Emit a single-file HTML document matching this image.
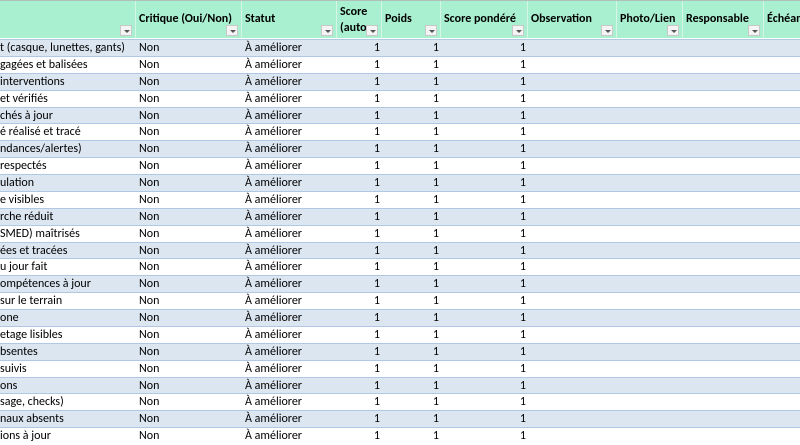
<!DOCTYPE html><html><head><meta charset="utf-8"><style>
body{margin:0;width:800px;height:445px;overflow:hidden;background:#fff;font-family:Calibri,"Liberation Sans",sans-serif;font-size:12px;color:#000;position:relative}
.h{position:absolute;top:0;height:38px;background:#a9f0d0;border-right:1px solid #d6f5e6;box-sizing:border-box;font-weight:bold;font-size:12px}
.h span{position:absolute;left:3px;top:12px;white-space:nowrap}
.f{position:absolute;right:3px;bottom:2px;width:12px;height:11px;background:#f4f4f4;border:1px solid #c8c8c8;box-sizing:border-box}
.f:after{content:"";position:absolute;left:3px;top:4px;border-left:3px solid transparent;border-right:3px solid transparent;border-top:3px solid #555}
.r{position:absolute;left:0;width:800px;height:17px;border-top:1px solid #b0c8e4;box-sizing:border-box}
.r div{position:absolute;top:1px;white-space:nowrap}
.n{text-align:right;width:20px}
#top{position:absolute;top:0;left:0;width:800px;height:1px;background:#b0c0b8}
</style></head><body>
<div class="h" style="left:0;width:136px"><div class="f"></div></div>
<div class="h" style="left:136px;width:106px"><span>Critique (Oui/Non)</span><div class="f"></div></div>
<div class="h" style="left:242px;width:95px"><span>Statut</span><div class="f"></div></div>
<div class="h" style="left:337px;width:45px"><span style="top:4px;line-height:16px">Score<br>(auto</span><div class="f"></div></div>
<div class="h" style="left:382px;width:59px"><span>Poids</span><div class="f"></div></div>
<div class="h" style="left:441px;width:87px"><span>Score pondéré</span><div class="f"></div></div>
<div class="h" style="left:528px;width:89px"><span>Observation</span><div class="f"></div></div>
<div class="h" style="left:617px;width:66px"><span>Photo/Lien</span><div class="f"></div></div>
<div class="h" style="left:683px;width:81px"><span>Responsable</span><div class="f"></div></div>
<div class="h" style="left:764px;width:36px;border:0"><span>Échéance</span></div>
<div id="top"></div>
<div id="rows"></div>
<script>
var t=["t (casque, lunettes, gants)","gagées et balisées","interventions","et vérifiés","chés à jour","é réalisé et tracé","ndances/alertes)","respectés","ulation","e visibles","rche réduit","SMED) maîtrisés","ées et tracées","u jour fait","ompétences à jour","sur le terrain","one","etage lisibles","bsentes","suivis","ons","sage, checks)","naux absents","ions à jour"];
var h="";for(var i=0;i<24;i++){var y=39+i*16.875;var bg=i%2==0?"#dce6f1":"#fff";
h+='<div class="r" style="top:'+y+'px;background:'+bg+'"><div style="left:0">'+t[i]+'</div><div style="left:139px">Non</div><div style="left:245px">À améliorer</div><div class="n" style="left:360px">1</div><div class="n" style="left:419px">1</div><div class="n" style="left:506px">1</div></div>';}
document.getElementById("rows").innerHTML=h;
</script>
</body></html>
